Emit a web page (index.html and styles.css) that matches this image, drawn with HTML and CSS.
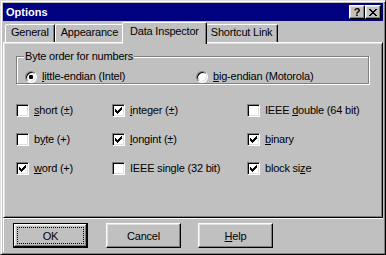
FILE: index.html
```html
<!DOCTYPE html>
<html>
<head>
<meta charset="utf-8">
<link rel="stylesheet" href="styles.css">
</head>
<body>
<svg width="0" height="0" class="defs">
  <symbol id="chk" viewBox="0 0 7 7"><path d="M0 2h1v3H0zM1 3h1v3H1zM2 4h1v3H2zM3 3h1v3H3zM4 2h1v3H4zM5 1h1v3H5zM6 0h1v3H6z"/></symbol>
</svg>
<div class="window">
  <div class="titlebar">
    <span class="title">Options</span>
    <div class="capbtns">
      <span class="capbtn help">?</span>
      <span class="capbtn close"><svg width="8" height="7" viewBox="0 0 8 7" shape-rendering="crispEdges"><path d="M0 0h2v1H0zM6 0h2v1H6zM1 1h2v1H1zM5 1h2v1H5zM2 2h4v1H2zM3 3h2v1H3zM2 4h4v1H2zM1 5h2v1H1zM5 5h2v1H5zM0 6h2v1H0zM6 6h2v1H6z"/></svg></span>
    </div>
  </div>
  <div class="tabs">
    <div class="tab">General</div>
    <div class="tab">Appearance</div>
    <div class="tab active">Data Inspector</div>
    <div class="tab">Shortcut Link</div>
  </div>
  <div class="panel">
    <div class="group">
      <span class="legend">Byte order for numbers</span>
      <div class="radios">
        <label class="opt"><span class="radio on"></span><span><u>l</u>ittle-endian (Intel)</span></label>
        <label class="opt"><span class="radio"></span><span><u>b</u>ig-endian (Motorola)</span></label>
      </div>
    </div>
    <div class="checks">
      <label class="opt"><span class="cb"></span><span><u>s</u>hort (±)</span></label>
      <label class="opt"><span class="cb"><svg class="mark"><use href="#chk"/></svg></span><span><u>i</u>nteger (±)</span></label>
      <label class="opt"><span class="cb"></span><span>IEEE <u>d</u>ouble (64 bit)</span></label>
      <label class="opt"><span class="cb"></span><span>b<u>y</u>te (+)</span></label>
      <label class="opt"><span class="cb"><svg class="mark"><use href="#chk"/></svg></span><span><u>l</u>ongint (±)</span></label>
      <label class="opt"><span class="cb"><svg class="mark"><use href="#chk"/></svg></span><span><u>b</u>inary</span></label>
      <label class="opt"><span class="cb"><svg class="mark"><use href="#chk"/></svg></span><span><u>w</u>ord (+)</span></label>
      <label class="opt"><span class="cb"></span><span>IEEE single (32 bit)</span></label>
      <label class="opt"><span class="cb"><svg class="mark"><use href="#chk"/></svg></span><span>block si<u>z</u>e</span></label>
    </div>
  </div>
  <div class="footer">
    <span class="btn default">OK</span>
    <span class="btn">Cancel</span>
    <span class="btn"><span><u>H</u>elp</span></span>
  </div>
</div>
</body>
</html>
```

FILE: styles.css
```css
* { box-sizing: border-box; margin: 0; padding: 0; }
html, body { width: 386px; height: 255px; overflow: hidden; background: #c0c0c0; }
body { font: 11px "Liberation Sans", Arial, sans-serif; color: #000; letter-spacing: -0.2px; }
.defs { position: absolute; }
u { text-underline-offset: 1px; }

.window {
  width: 386px; height: 255px; background: #c0c0c0;
  border: 1px solid; border-color: #dfdfdf #000 #000 #dfdfdf;
  box-shadow: inset 1px 1px #fff, inset -1px -1px #808080;
  padding: 2px;
  display: flex; flex-direction: column;
}

.titlebar {
  height: 18px; background: #000080; color: #fff;
  display: flex; align-items: center; justify-content: space-between;
  padding: 0 2px 0 3px;
}
.title { font-weight: bold; font-size: 11px; letter-spacing: 0; }
.capbtns { display: flex; }
.capbtn {
  width: 16px; height: 14px; background: #c0c0c0; color: #000;
  border: 1px solid; border-color: #fff #000 #000 #fff;
  box-shadow: inset -1px -1px #808080, inset 1px 1px #dfdfdf;
  display: flex; align-items: center; justify-content: center;
  font-weight: bold; font-size: 11px; line-height: 12px;
}

.tabs {
  display: flex; align-items: flex-end; height: 20px;
  margin-top: 1px; padding-left: 2px;
  position: relative; z-index: 1;
}
.tab {
  height: 18px; padding: 0 5px; line-height: 15px;
  border: 1px solid; border-bottom: none;
  border-color: #fff #000 transparent #fff;
  box-shadow: inset -1px 0 #808080;
  border-radius: 2px 2px 0 0;
  background: #c0c0c0;
}
.tab.active {
  height: 22px; margin: 0 -2px -2px; padding: 0 7px; line-height: 17px;
  position: relative; z-index: 2;
}

.panel {
  height: 176px;
  border: 1px solid; border-color: #fff #000 #000 #fff;
  box-shadow: inset 1px 1px #dfdfdf, inset -1px -1px #808080;
  padding: 13px 13px 0 12px;
  display: flex; flex-direction: column;
}

.group {
  position: relative; height: 28px;
  border: 1px solid #808080;
  box-shadow: inset 1px 1px #fff, 1px 1px #fff;
  padding: 13px 0 0 8px;
}
.legend {
  position: absolute; top: -7px; left: 7px;
  background: #c0c0c0; padding: 0 1px; line-height: 13px;
}
.radios { display: grid; grid-template-columns: 171px auto; }

.opt { display: flex; align-items: center; gap: 5px; line-height: 13px; }
.radio {
  width: 12px; height: 12px; border-radius: 50%; background: #fff;
  border: 1px solid; border-color: #808080 #fff #fff #808080;
  box-shadow: inset 1px 1px #000, inset -1px -1px #dfdfdf;
  display: flex; align-items: center; justify-content: center;
}
.radio.on::after {
  content: ""; width: 4px; height: 4px; background: #000; border-radius: 1px;
}

.checks {
  margin-top: 20px;
  display: grid; grid-template-columns: 96px 135px auto;
  grid-auto-rows: 13px; row-gap: 16px;
}
.cb {
  width: 13px; height: 13px; background: #fff; flex: none;
  border: 1px solid; border-color: #808080 #fff #fff #808080;
  box-shadow: inset 1px 1px #000, inset -1px -1px #dfdfdf;
  display: flex; align-items: center; justify-content: center;
}
.mark { width: 7px; height: 7px; fill: #000; shape-rendering: crispEdges; }

.footer {
  flex: 1;
  border-top: 1px solid #fff; border-left: 1px solid #fff;
  display: flex; gap: 17px;
  padding: 4px 0 0 9px;
}
.btn {
  width: 75px; height: 25px; position: relative;
  border: 1px solid; border-color: #fff #000 #000 #fff;
  box-shadow: inset -1px -1px #808080, inset 1px 1px #dfdfdf;
  display: flex; align-items: center; justify-content: center;
}
.btn.default {
  margin-right: 1px;
  border-color: #000;
  box-shadow: inset -1px -1px #000, inset 1px 1px #fff, inset -2px -2px #808080, inset 2px 2px #dfdfdf;
}
.btn.default::after {
  content: ""; position: absolute; inset: 3px;
  border: 1px dotted #000;
}
```
